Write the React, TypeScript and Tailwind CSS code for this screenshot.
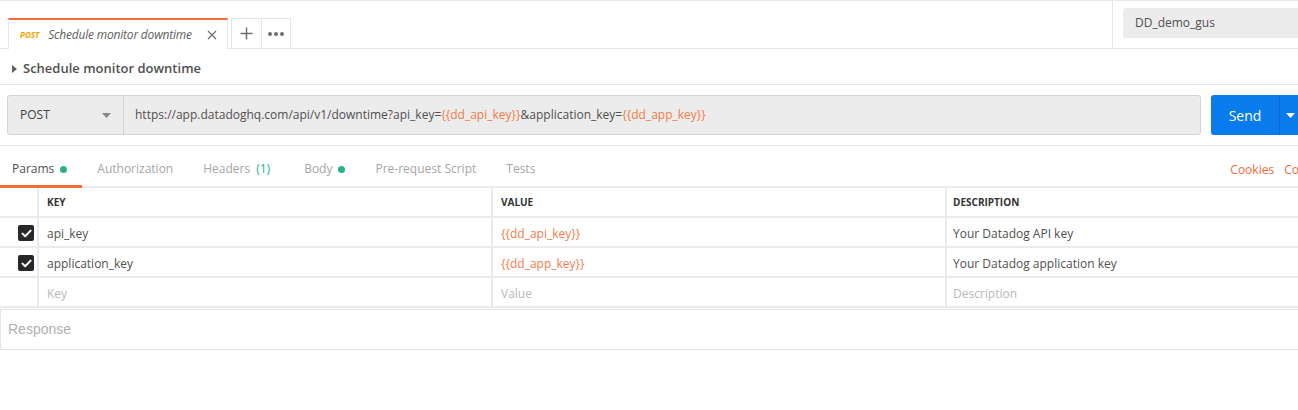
import React from 'react'

const PARAMS = [
  { key: 'api_key', value: '{{dd_api_key}}', desc: 'Your Datadog API key' },
  { key: 'application_key', value: '{{dd_app_key}}', desc: 'Your Datadog application key' },
]

const TABS: { label: string; extra?: 'dot' | 'count'; active?: boolean }[] = [
  { label: 'Params', extra: 'dot', active: true },
  { label: 'Authorization' },
  { label: 'Headers', extra: 'count' },
  { label: 'Body', extra: 'dot' },
  { label: 'Pre-request Script' },
  { label: 'Tests' },
]

function Check() {
  return (
    <span className="flex h-[16px] w-[16px] items-center justify-center rounded-[2px] bg-[#282828]">
      <svg width="11" height="9" viewBox="0 0 11 9" fill="none">
        <path d="M1.5 4.6 L4.2 7.2 L9.6 1.6" stroke="white" strokeWidth="2" strokeLinecap="round" strokeLinejoin="round" />
      </svg>
    </span>
  )
}

function Row({ check, k, v, d, placeholder }: { check?: boolean; k: string; v: string; d: string; placeholder?: boolean }) {
  const txt = placeholder ? 'text-[#b8b8b8]' : 'text-[#505050]'
  return (
    <div className="flex h-[30px] border-b-2 border-[#ebebeb] text-[12px]">
      <div className="flex w-[37px] items-center justify-end pr-[3px] pt-[2px]">{check && <Check />}</div>
      <div className={`flex w-[454px] items-center border-l-2 border-[#ebebeb] pl-[8px] pt-[3px] ${txt}`}>{k}</div>
      <div className={`flex w-[454px] items-center border-l-2 border-[#ebebeb] pl-[8px] pt-[3px] ${placeholder ? txt : 'text-[#f47b4a]'}`}>{v}</div>
      <div className={`flex flex-1 items-center border-l-2 border-[#ebebeb] pl-[6px] pt-[3px] ${txt}`}>{d}</div>
    </div>
  )
}

export default function App() {
  return (
    <div className="h-[410px] w-[1298px] overflow-hidden bg-white font-['Open_Sans',sans-serif] text-[#505050]">
      {/* top tab bar */}
      <div className="flex h-[49px] border-t border-[#e8e8e8]">
        <div className="flex flex-1 items-end">
          <div className="h-[30px] w-[8px] border-b border-[#e6e6e6]" />
          <div className="flex h-[31px] w-[220px] items-center border-x border-t-2 border-x-[#e6e6e6] border-t-[#f26b3a] bg-white pl-[11px] pr-[8px] pt-[1px]">
            <span className="mr-[9px] text-[8px] font-bold italic text-[#f0a500]">POST</span>
            <span className="flex-1 text-[12px] italic tracking-[-0.2px] text-[#606060]">Schedule monitor downtime</span>
            <svg width="10" height="10" viewBox="0 0 10 10" className="mr-[2px]">
              <path d="M1 1 L9 9 M9 1 L1 9" stroke="#707070" strokeWidth="1.3" />
            </svg>
          </div>
          <div className="h-[30px] w-[3px] border-b border-[#e6e6e6]" />
          <div className="flex h-[31px] w-[31px] items-center justify-center border border-[#e6e6e6] text-[#707070]">
            <svg width="13" height="13" viewBox="0 0 13 13">
              <path d="M6.5 0.5 V12.5 M0.5 6.5 H12.5" stroke="#707070" strokeWidth="1.5" />
            </svg>
          </div>
          <div className="flex h-[31px] w-[29px] items-center justify-center gap-[2px] border border-l-0 border-[#e6e6e6]">
            <span className="h-[4px] w-[4px] rounded-full bg-[#707070]" />
            <span className="h-[4px] w-[4px] rounded-full bg-[#707070]" />
            <span className="h-[4px] w-[4px] rounded-full bg-[#707070]" />
          </div>
          <div className="h-[30px] flex-1 border-b border-[#e6e6e6]" />
        </div>
        <div className="flex w-[186px] items-start border-b border-l border-[#e6e6e6] pl-[10px] pt-[7px]">
          <div className="flex h-[30px] flex-1 items-center rounded-l-[3px] bg-[#ececec] pl-[12px] text-[12px] text-[#505050]">
            DD_demo_gus
          </div>
        </div>
      </div>

      {/* request name */}
      <div className="flex h-[36px] items-center border-b border-[#e8e8e8] pl-[12px] pt-[5px]">
        <svg width="5" height="8" viewBox="0 0 5 8" className="mr-[6px]">
          <path d="M0 0 L5 4 L0 8 Z" fill="#606060" />
        </svg>
        <span className="text-[13px] font-semibold text-[#505050]">Schedule monitor downtime</span>
      </div>

      {/* url bar */}
      <div className="flex h-[61px] items-center border-b border-[#e8e8e8] pl-[7px]">
        <div className="flex h-[40px] w-[1194px] shrink-0 rounded-[3px] border border-[#d4d4d4] bg-[#ececec]">
          <div className="flex w-[116px] items-center justify-between border-r border-[#d4d4d4] pl-[12px] pr-[12px] text-[12px] text-[#404040]">
            <span>POST</span>
            <svg width="9" height="5" viewBox="0 0 9 5">
              <path d="M0 0 L9 0 L4.5 5 Z" fill="#888" />
            </svg>
          </div>
          <div className="flex items-center pl-[11px] text-[12px] text-[#505050]">
            https://app.datadoghq.com/api/v1/downtime?api_key=
            <span className="text-[#f47b4a]">{'{{dd_api_key}}'}</span>
            &amp;application_key=
            <span className="text-[#f47b4a]">{'{{dd_app_key}}'}</span>
          </div>
        </div>
        <div className="ml-[10px] flex h-[40px] w-[100px] shrink-0 rounded-[3px] bg-[#097bed] text-white">
          <div className="flex w-[69px] items-center justify-center border-r border-[#0a6bd0] text-[14px]">Send</div>
          <div className="flex flex-1 items-center pl-[6px]">
            <svg width="9" height="5" viewBox="0 0 9 5">
              <path d="M0 0 L9 0 L4.5 5 Z" fill="white" />
            </svg>
          </div>
        </div>
      </div>

      {/* request tabs */}
      <div className="flex h-[42px] border-b-2 border-[#ebebeb]">
        {TABS.map((t, i) => (
          <div
            key={t.label}
            className={`-mb-[2px] flex items-center border-b-[3px] pt-[7px] text-[12px] ${
              i === 0 ? 'pl-[12px] pr-[15px]' : 'px-[15px]'
            } ${t.active ? 'border-[#f26b3a] text-[#505050]' : 'border-transparent text-[#a6a6a6]'}`}
          >
            {t.label}
            {t.extra === 'dot' && <span className="ml-[6px] h-[7px] w-[7px] rounded-full bg-[#26b47f]" />}
            {t.extra === 'count' && <span className="ml-[6px] mr-[4px] text-[#26b47f]">(1)</span>}
          </div>
        ))}
        <div className="flex-1" />
        <div className="-mr-[15px] flex shrink-0 items-center gap-[10px] pt-[7px] text-[12px] text-[#f26b3a]">
          <span>Cookies</span>
          <span>Code</span>
        </div>
      </div>

      {/* params table */}
      <div className="flex h-[30px] border-b-2 border-[#ebebeb] text-[10px] font-bold text-[#333]">
        <div className="w-[37px]" />
        <div className="flex w-[454px] items-center border-l-2 border-[#ebebeb] pl-[8px]">KEY</div>
        <div className="flex w-[454px] items-center border-l-2 border-[#ebebeb] pl-[8px]">VALUE</div>
        <div className="flex flex-1 items-center border-l-2 border-[#ebebeb] pl-[6px]">DESCRIPTION</div>
      </div>
      {PARAMS.map(p => (
        <Row key={p.key} check k={p.key} v={p.value} d={p.desc} />
      ))}
      <Row placeholder k="Key" v="Value" d="Description" />

      <div className="mt-[1px] flex h-[41px] items-center border border-r-0 border-[#e4e4e4] pl-[7px] font-['Liberation_Sans',sans-serif] text-[14px] text-[#b0b0b0]">
        Response
      </div>
    </div>
  )
}
